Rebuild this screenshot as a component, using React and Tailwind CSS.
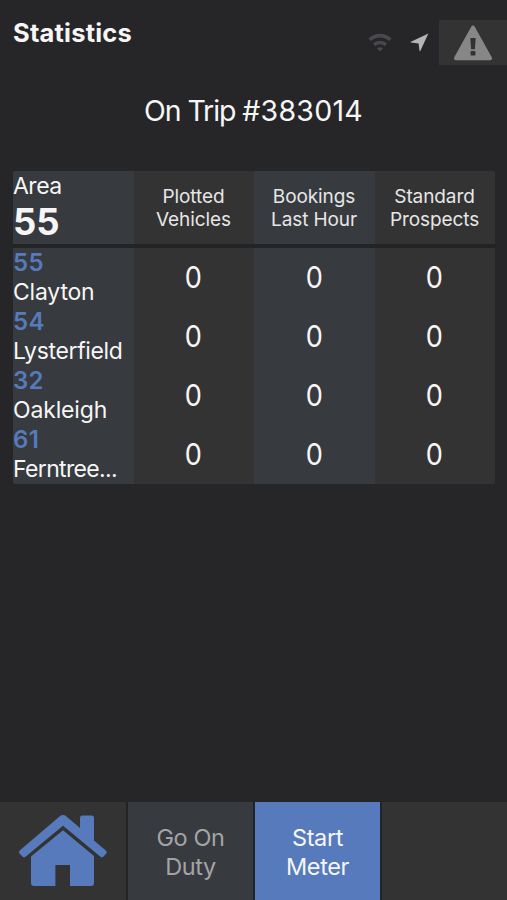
const areas = [
  { id: "55", name: "Clayton", track: "tracking-[-0.2px]" },
  { id: "54", name: "Lysterfield", track: "tracking-[-0.35px]" },
  { id: "32", name: "Oakleigh", track: "tracking-[-0.15px]" },
  { id: "61", name: "Ferntree...", track: "tracking-[-0.65px]" },
];

const columns = [
  { lines: ["Plotted", "Vehicles"], bg: "bg-[#333333]" },
  { lines: ["Bookings", "Last Hour"], bg: "bg-[#373a3e]" },
  { lines: ["Standard", "Prospects"], bg: "bg-[#333333]" },
];

const grid = "grid grid-cols-[121px_120px_121px_120px]";

function WifiIcon() {
  return (
    <svg width="24" height="19" viewBox="0 0 24 19" fill="none" stroke="#48494e" strokeWidth="3.6">
      <path d="M1.6 6.8C7.4 1.2 16.6 1.2 22.4 6.8" />
      <path d="M6 11.7C9.4 8.7 14.6 8.7 18 11.7" />
      <path d="M12 18.4L8.9 15.4C10.7 13.9 13.3 13.9 15.1 15.4Z" fill="#48494e" stroke="none" />
    </svg>
  );
}

function LocationIcon() {
  return (
    <svg width="19" height="19" viewBox="0 0 19 19" fill="#b4b4b4">
      <path d="M18.4 0.6L10.4 17.8Q9.8 18.6 9.4 17.6L8.6 10.4L1 9.6Q0 9.2 0.9 8.7Z" />
    </svg>
  );
}

function WarningIcon() {
  return (
    <svg width="40" height="36" viewBox="0 0 40 36">
      <path
        d="M20 2.6L37 33.2H3Z"
        fill="#878787"
        stroke="#878787"
        strokeWidth="4"
        strokeLinejoin="round"
      />
      <path d="M17.3 13H22.7L21.9 24.2H18.1Z" fill="#333333" />
      <rect x="17.5" y="26" width="5" height="4.4" rx="1" fill="#333333" />
    </svg>
  );
}

function HomeIcon() {
  return (
    <svg width="90" height="72" viewBox="0 0 90 72" fill="#567abb">
      <path d="M41.5 1.4Q45 -1.2 48.5 1.4L62 13V3Q62 0.6 64.4 0.6H73.6Q76 0.6 76 3V25.6L87.8 35.4Q89.6 37 88 38.8L85.6 41.6Q84 43.2 82.2 41.6L45 10.8L7.8 41.6Q6 43.2 4.4 41.6L1.6 38.6Q0.2 36.9 2 35.3Z" />
      <path d="M45 15.2L76 41V68Q76 71 73 71H52V50H37.4V71H16Q13 71 13 68V41.6Z" />
    </svg>
  );
}

export default function App() {
  return (
    <div className="flex h-[900px] w-[507px] flex-col overflow-hidden bg-[#262628] font-['Inter',sans-serif] text-[#f6f6f6]">
      <header className="flex h-[66px] items-start justify-between pl-[13px]">
        <h1 className="pt-[18px] text-[25.5px] leading-[30px] font-bold tracking-[0.2px]">Statistics</h1>
        <div className="flex pt-[20px]">
          <div className="flex h-[45px] items-center gap-[18px] pr-[10px]">
            <WifiIcon />
            <LocationIcon />
          </div>
          <div className="flex h-[45px] w-[68px] items-center justify-center bg-[#333333]">
            <WarningIcon />
          </div>
        </div>
      </header>

      <div className="flex h-[90px] items-center justify-center text-[28.5px] whitespace-pre">
        <span className="tracking-[-1.1px]">On Trip </span>
        <span className="tracking-[0.25px]">#383014</span>
      </div>

      <main className="mt-[15px] ml-[13px] w-[482px] overflow-hidden rounded-[2px]">
        <div className={`${grid} h-[73px]`}>
          <div className="bg-[#373a3e]">
            <div className="text-[23px] leading-[30px] tracking-[-0.5px]">Area</div>
            <div className="text-[36.5px] leading-[43px] font-bold">55</div>
          </div>
          {columns.map((c) => (
            <div
              key={c.lines[0]}
              className={`${c.bg} flex flex-col items-center justify-center pr-[1px] text-[19px] leading-[23px] tracking-[-0.1px] whitespace-nowrap text-[#e6e6e6]`}
            >
              <span>{c.lines[0]}</span>
              <span>{c.lines[1]}</span>
            </div>
          ))}
        </div>
        <div className="h-[4px] bg-[#232426]" />
        {areas.map((a) => (
          <div key={a.id} className={`${grid} h-[59px]`}>
            <div className="bg-[#373a3e]">
              <div className="text-[24px] leading-[30px] font-semibold tracking-[0.3px] text-[#567abb]">{a.id}</div>
              <div className={`${a.track} text-[23px] leading-[29px] whitespace-nowrap`}>{a.name}</div>
            </div>
            {columns.map((c) => (
              <div key={c.lines[0]} className={`${c.bg} flex items-center justify-center pr-[1px] text-[29.5px]`}>
                <span className="scale-x-92">0</span>
              </div>
            ))}
          </div>
        ))}
      </main>

      <nav className="mt-auto flex h-[98px] bg-[#222326] text-center text-[23.5px] leading-[29px] tracking-[-0.4px]">
        <div className="flex w-[126px] items-center justify-center bg-[#333333]">
          <HomeIcon />
        </div>
        <div className="ml-[2px] flex w-[125px] flex-col justify-center bg-[#373a3e] pt-[1px] text-[#a3a4a6]">
          <span>Go On</span>
          <span>Duty</span>
        </div>
        <div className="ml-[2px] flex w-[125px] flex-col justify-center bg-[#567abb] pt-[1px]">
          <span>Start</span>
          <span>Meter</span>
        </div>
        <div className="ml-[2px] flex-1 bg-[#333333]" />
      </nav>
    </div>
  );
}
